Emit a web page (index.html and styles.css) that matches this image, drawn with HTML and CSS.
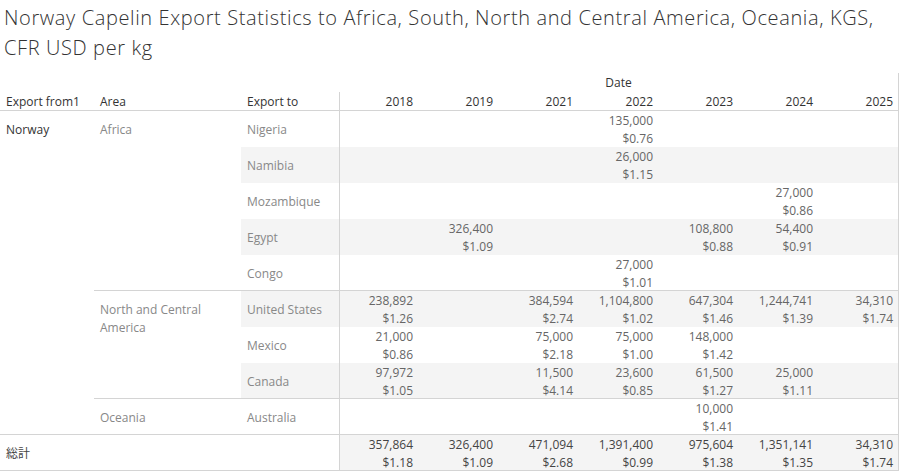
FILE: index.html
```html
<!DOCTYPE html>
<html>
<head>
<meta charset="utf-8">
<link rel="stylesheet" href="styles.css">
</head>
<body>
<div class="title">Norway Capelin Export Statistics to Africa, South, North and Central America, Oceania, KGS, CFR USD per kg</div>
<div class="grid">
  <div class="corner"></div>
  <div class="date">Date</div>
  <div class="hd">Export from1</div>
  <div class="hd">Area</div>
  <div class="hd">Export to</div>
  <div class="hd yr f">2018</div>
  <div class="hd yr">2019</div>
  <div class="hd yr">2021</div>
  <div class="hd yr">2022</div>
  <div class="hd yr">2023</div>
  <div class="hd yr">2024</div>
  <div class="hd yr l">2025</div>

  <div class="from">Norway</div>
  <div class="area africa sep">Africa</div>

  <div class="to">Nigeria</div>
  <div class="v f"></div><div class="v"></div><div class="v"></div>
  <div class="v">135,000<br>$0.76</div>
  <div class="v"></div><div class="v"></div><div class="v l"></div>

  <div class="to sh">Namibia</div>
  <div class="v sh f"></div><div class="v sh"></div><div class="v sh"></div>
  <div class="v sh">26,000<br>$1.15</div>
  <div class="v sh"></div><div class="v sh"></div><div class="v sh l"></div>

  <div class="to">Mozambique</div>
  <div class="v f"></div><div class="v"></div><div class="v"></div><div class="v"></div><div class="v"></div>
  <div class="v">27,000<br>$0.86</div>
  <div class="v l"></div>

  <div class="to sh">Egypt</div>
  <div class="v sh f"></div>
  <div class="v sh">326,400<br>$1.09</div>
  <div class="v sh"></div><div class="v sh"></div>
  <div class="v sh">108,800<br>$0.88</div>
  <div class="v sh">54,400<br>$0.91</div>
  <div class="v sh l"></div>

  <div class="to sep">Congo</div>
  <div class="v sep f"></div><div class="v sep"></div><div class="v sep"></div>
  <div class="v sep">27,000<br>$1.01</div>
  <div class="v sep"></div><div class="v sep"></div><div class="v sep l"></div>

  <div class="area america sep">North and Central America</div>

  <div class="to sh">United States</div>
  <div class="v sh f">238,892<br>$1.26</div>
  <div class="v sh"></div>
  <div class="v sh">384,594<br>$2.74</div>
  <div class="v sh">1,104,800<br>$1.02</div>
  <div class="v sh">647,304<br>$1.46</div>
  <div class="v sh">1,244,741<br>$1.39</div>
  <div class="v sh l">34,310<br>$1.74</div>

  <div class="to">Mexico</div>
  <div class="v f">21,000<br>$0.86</div>
  <div class="v"></div>
  <div class="v">75,000<br>$2.18</div>
  <div class="v">75,000<br>$1.00</div>
  <div class="v">148,000<br>$1.42</div>
  <div class="v"></div><div class="v l"></div>

  <div class="to sh sep">Canada</div>
  <div class="v sh sep f">97,972<br>$1.05</div>
  <div class="v sh sep"></div>
  <div class="v sh sep">11,500<br>$4.14</div>
  <div class="v sh sep">23,600<br>$0.85</div>
  <div class="v sh sep">61,500<br>$1.27</div>
  <div class="v sh sep">25,000<br>$1.11</div>
  <div class="v sh sep l"></div>

  <div class="area oceania sep">Oceania</div>

  <div class="to sep">Australia</div>
  <div class="v sep f"></div><div class="v sep"></div><div class="v sep"></div><div class="v sep"></div>
  <div class="v sep">10,000<br>$1.41</div>
  <div class="v sep"></div><div class="v sep l"></div>

  <div class="total-label sep">総計</div>
  <div class="v sh sep tot f">357,864<br>$1.18</div>
  <div class="v sh sep tot">326,400<br>$1.09</div>
  <div class="v sh sep tot">471,094<br>$2.68</div>
  <div class="v sh sep tot">1,391,400<br>$0.99</div>
  <div class="v sh sep tot">975,604<br>$1.38</div>
  <div class="v sh sep tot">1,351,141<br>$1.35</div>
  <div class="v sh sep tot l">34,310<br>$1.74</div>
</div>
</body>
</html>
```
FILE: styles.css
```css
* { box-sizing: border-box; }
html, body {
  margin: 0;
  padding: 0;
  background: #ffffff;
}
body {
  width: 900px;
  height: 472px;
  overflow: hidden;
  font-family: "Open Sans", "Noto Sans CJK JP", sans-serif;
}
.title {
  padding: 3px 4px 0 4px;
  height: 73px;
  font-size: 20px;
  line-height: 30px;
  font-weight: 300;
  letter-spacing: 0.62px;
  color: #333333;
}
.grid {
  display: grid;
  grid-template-columns: 94px 147px 98px repeat(7, 80px);
  grid-template-rows: 19px 19px repeat(10, 36px);
  font-size: 12px;
  line-height: 18px;
}
.corner {
  grid-column: 1 / 4;
  grid-row: 1;
}
.date {
  grid-column: 4 / 11;
  grid-row: 1;
  text-align: center;
  color: #333333;
  line-height: 19px;
  border-right: 1px solid #d4d4d4;
}
.hd {
  grid-row: 2;
  color: #333333;
  padding: 0 6px;
  line-height: 19px;
  border-bottom: 1px solid #d4d4d4;
  white-space: nowrap;
}
.yr { text-align: right; }
.from {
  grid-column: 1;
  grid-row: 3 / span 9;
  padding: 10px 6px 0;
  color: #333333;
  border-bottom: 1px solid #d4d4d4;
}
.area {
  grid-column: 2;
  padding: 10px 6px 0;
  color: #888888;
}
.africa { grid-row: 3 / span 5; }
.america { grid-row: 8 / span 3; }
.oceania { grid-row: 11 / span 1; }
.to {
  grid-column: 3;
  padding: 10px 6px 0;
  color: #888888;
  white-space: nowrap;
}
.v {
  text-align: right;
  padding: 1px 6px 0 0;
  color: #666666;
  white-space: nowrap;
}
.sh { background: #f4f4f4; }
.sep { border-bottom: 1px solid #d4d4d4; }
.tot { color: #444444; }
.f { border-left: 1px solid #d4d4d4; }
.l { border-right: 1px solid #d4d4d4; padding-right: 5px; }
.total-label {
  grid-column: 1 / 4;
  padding: 10px 6px 0;
  color: #444444;
}
```
